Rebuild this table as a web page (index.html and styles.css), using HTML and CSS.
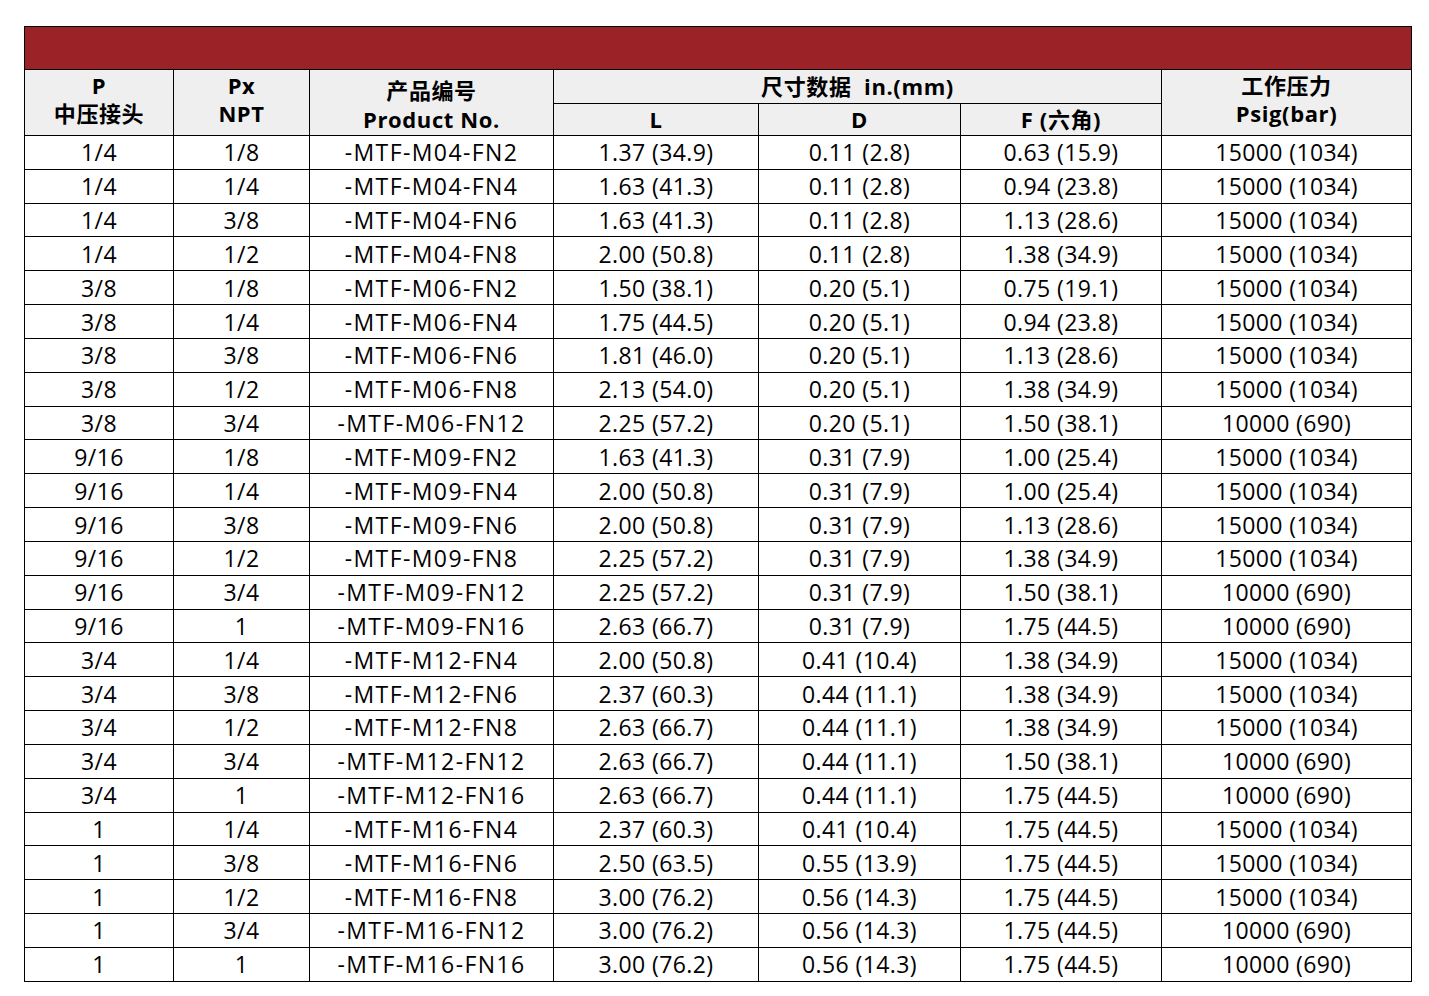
FILE: index.html
```html
<!DOCTYPE html>
<html lang="zh">
<head>
<meta charset="utf-8">
<link rel="stylesheet" href="styles.css">
</head>
<body>
<table class="spec">
  <colgroup>
    <col class="c1"><col class="c2"><col class="c3"><col class="c4"><col class="c5"><col class="c6"><col class="c7">
  </colgroup>
  <thead>
    <tr class="banner"><th colspan="7"></th></tr>
    <tr class="h1">
      <th rowspan="2" class="up">P<br>中压接头</th>
      <th rowspan="2" class="up">Px<br>NPT</th>
      <th rowspan="2" class="low">产品编号<br>Product No.</th>
      <th colspan="3">尺寸数据&nbsp; in.(mm)</th>
      <th rowspan="2" class="up">工作压力<br>Psig(bar)</th>
    </tr>
    <tr class="h2">
      <th>L</th><th>D</th><th>F (六角)</th>
    </tr>
  </thead>
  <tbody>
    <tr><td>1/4</td><td>1/8</td><td class="pn">-MTF-M04-FN2</td><td>1.37 (34.9)</td><td>0.11 (2.8)</td><td>0.63 (15.9)</td><td>15000 (1034)</td></tr>
    <tr><td>1/4</td><td>1/4</td><td class="pn">-MTF-M04-FN4</td><td>1.63 (41.3)</td><td>0.11 (2.8)</td><td>0.94 (23.8)</td><td>15000 (1034)</td></tr>
    <tr><td>1/4</td><td>3/8</td><td class="pn">-MTF-M04-FN6</td><td>1.63 (41.3)</td><td>0.11 (2.8)</td><td>1.13 (28.6)</td><td>15000 (1034)</td></tr>
    <tr><td>1/4</td><td>1/2</td><td class="pn">-MTF-M04-FN8</td><td>2.00 (50.8)</td><td>0.11 (2.8)</td><td>1.38 (34.9)</td><td>15000 (1034)</td></tr>
    <tr><td>3/8</td><td>1/8</td><td class="pn">-MTF-M06-FN2</td><td>1.50 (38.1)</td><td>0.20 (5.1)</td><td>0.75 (19.1)</td><td>15000 (1034)</td></tr>
    <tr><td>3/8</td><td>1/4</td><td class="pn">-MTF-M06-FN4</td><td>1.75 (44.5)</td><td>0.20 (5.1)</td><td>0.94 (23.8)</td><td>15000 (1034)</td></tr>
    <tr><td>3/8</td><td>3/8</td><td class="pn">-MTF-M06-FN6</td><td>1.81 (46.0)</td><td>0.20 (5.1)</td><td>1.13 (28.6)</td><td>15000 (1034)</td></tr>
    <tr><td>3/8</td><td>1/2</td><td class="pn">-MTF-M06-FN8</td><td>2.13 (54.0)</td><td>0.20 (5.1)</td><td>1.38 (34.9)</td><td>15000 (1034)</td></tr>
    <tr><td>3/8</td><td>3/4</td><td class="pn">-MTF-M06-FN12</td><td>2.25 (57.2)</td><td>0.20 (5.1)</td><td>1.50 (38.1)</td><td>10000 (690)</td></tr>
    <tr><td>9/16</td><td>1/8</td><td class="pn">-MTF-M09-FN2</td><td>1.63 (41.3)</td><td>0.31 (7.9)</td><td>1.00 (25.4)</td><td>15000 (1034)</td></tr>
    <tr><td>9/16</td><td>1/4</td><td class="pn">-MTF-M09-FN4</td><td>2.00 (50.8)</td><td>0.31 (7.9)</td><td>1.00 (25.4)</td><td>15000 (1034)</td></tr>
    <tr><td>9/16</td><td>3/8</td><td class="pn">-MTF-M09-FN6</td><td>2.00 (50.8)</td><td>0.31 (7.9)</td><td>1.13 (28.6)</td><td>15000 (1034)</td></tr>
    <tr><td>9/16</td><td>1/2</td><td class="pn">-MTF-M09-FN8</td><td>2.25 (57.2)</td><td>0.31 (7.9)</td><td>1.38 (34.9)</td><td>15000 (1034)</td></tr>
    <tr><td>9/16</td><td>3/4</td><td class="pn">-MTF-M09-FN12</td><td>2.25 (57.2)</td><td>0.31 (7.9)</td><td>1.50 (38.1)</td><td>10000 (690)</td></tr>
    <tr><td>9/16</td><td>1</td><td class="pn">-MTF-M09-FN16</td><td>2.63 (66.7)</td><td>0.31 (7.9)</td><td>1.75 (44.5)</td><td>10000 (690)</td></tr>
    <tr><td>3/4</td><td>1/4</td><td class="pn">-MTF-M12-FN4</td><td>2.00 (50.8)</td><td>0.41 (10.4)</td><td>1.38 (34.9)</td><td>15000 (1034)</td></tr>
    <tr><td>3/4</td><td>3/8</td><td class="pn">-MTF-M12-FN6</td><td>2.37 (60.3)</td><td>0.44 (11.1)</td><td>1.38 (34.9)</td><td>15000 (1034)</td></tr>
    <tr><td>3/4</td><td>1/2</td><td class="pn">-MTF-M12-FN8</td><td>2.63 (66.7)</td><td>0.44 (11.1)</td><td>1.38 (34.9)</td><td>15000 (1034)</td></tr>
    <tr><td>3/4</td><td>3/4</td><td class="pn">-MTF-M12-FN12</td><td>2.63 (66.7)</td><td>0.44 (11.1)</td><td>1.50 (38.1)</td><td>10000 (690)</td></tr>
    <tr><td>3/4</td><td>1</td><td class="pn">-MTF-M12-FN16</td><td>2.63 (66.7)</td><td>0.44 (11.1)</td><td>1.75 (44.5)</td><td>10000 (690)</td></tr>
    <tr><td>1</td><td>1/4</td><td class="pn">-MTF-M16-FN4</td><td>2.37 (60.3)</td><td>0.41 (10.4)</td><td>1.75 (44.5)</td><td>15000 (1034)</td></tr>
    <tr><td>1</td><td>3/8</td><td class="pn">-MTF-M16-FN6</td><td>2.50 (63.5)</td><td>0.55 (13.9)</td><td>1.75 (44.5)</td><td>15000 (1034)</td></tr>
    <tr><td>1</td><td>1/2</td><td class="pn">-MTF-M16-FN8</td><td>3.00 (76.2)</td><td>0.56 (14.3)</td><td>1.75 (44.5)</td><td>15000 (1034)</td></tr>
    <tr><td>1</td><td>3/4</td><td class="pn">-MTF-M16-FN12</td><td>3.00 (76.2)</td><td>0.56 (14.3)</td><td>1.75 (44.5)</td><td>10000 (690)</td></tr>
    <tr><td>1</td><td>1</td><td class="pn">-MTF-M16-FN16</td><td>3.00 (76.2)</td><td>0.56 (14.3)</td><td>1.75 (44.5)</td><td>10000 (690)</td></tr>
  </tbody>
</table>
</body>
</html>
```

FILE: styles.css
```css
html, body {
  margin: 0;
  padding: 0;
  background: #ffffff;
}
body {
  padding: 26px 0 0 24px;
  font-family: "Open Sans", "Noto Sans", "Noto Sans CJK SC", sans-serif;
  color: #000;
}
.spec {
  border-collapse: collapse;
  table-layout: fixed;
  width: 1387px;
}
.c1 { width: 149px; }
.c2 { width: 136px; }
.c3 { width: 244px; }
.c4 { width: 205px; }
.c5 { width: 202px; }
.c6 { width: 201px; }
.c7 { width: 250px; }

.spec th, .spec td {
  border: 1px solid #000;
  padding: 0;
  text-align: center;
  vertical-align: middle;
}
.banner th {
  background: #9b2226;
  height: 42px;
}
.spec thead .h1 th, .spec thead .h2 th {
  background: #efefef;
  font-family: "Open Sans", "Noto Sans CJK SC", sans-serif;
  font-weight: 700;
  font-size: 22px;
  line-height: 29px;
  letter-spacing: 0.6px;
}
.h1 th { height: 33px; }
.h2 th { height: 31px; line-height: 31px; }
.spec thead .h1 th.low { padding-top: 5px; }
.spec thead .h1 th.up { padding-bottom: 7px; line-height: 28px; }
.spec td {
  font-size: 23px;
  height: 32.84px;
  line-height: 30px;
  font-weight: 400;
  letter-spacing: 0.4px;
}
.spec td.pn {
  letter-spacing: 1.4px;
}
```
